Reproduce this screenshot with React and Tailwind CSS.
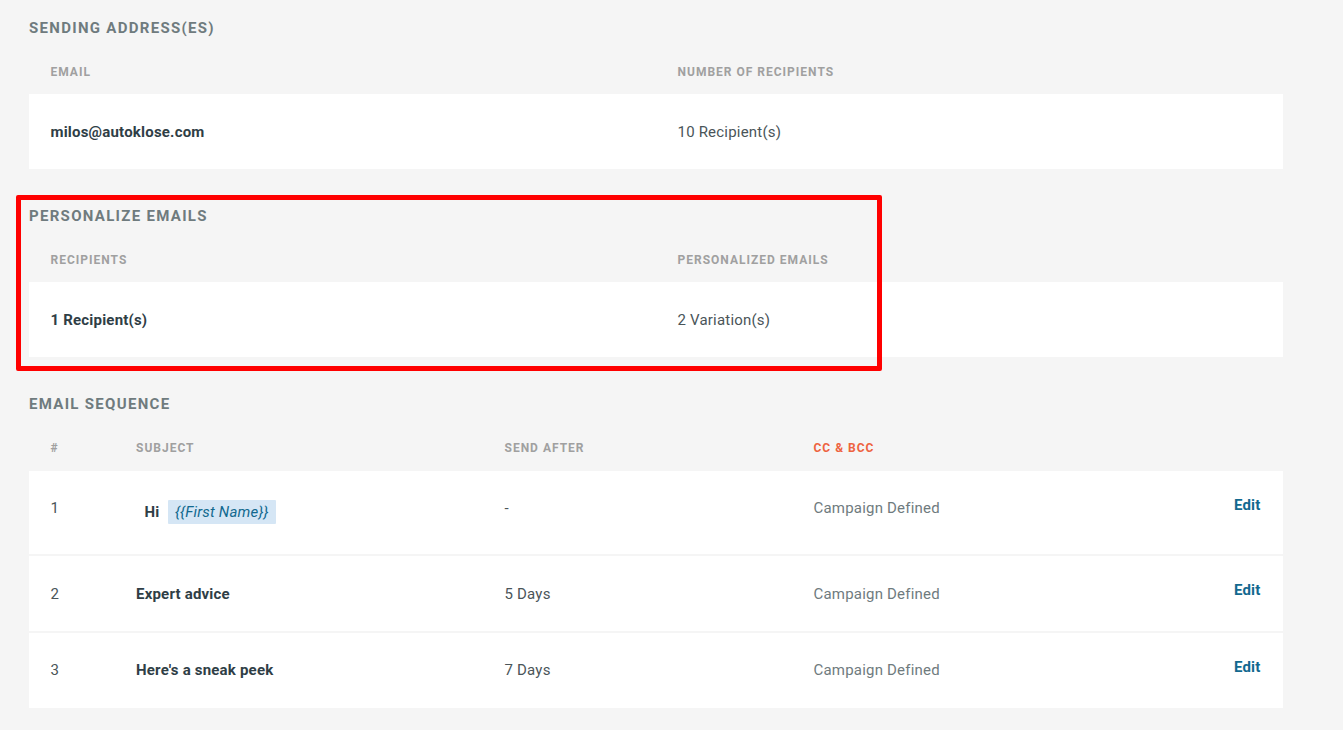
import React from "react";

const font = { fontFamily: "Roboto, sans-serif" };

function SectionTitle({ children }) {
  return (
    <h2 className="h-[20px] text-[15px] leading-[20px] font-bold tracking-[1.3px] text-[#6f7b7e]">
      {children}
    </h2>
  );
}

function HeadCell({ children, className = "text-[#a0a0a0]" }) {
  return (
    <div className={`text-[12px] leading-[16px] font-bold tracking-[1px] ${className}`}>
      {children}
    </div>
  );
}

function SummaryTable({ title, leftHead, rightHead, left, right, className = "" }) {
  return (
    <section className={className}>
      <SectionTitle>{title}</SectionTitle>
      <div className="grid grid-cols-[627px_1fr] px-[21.5px] pt-[26px] pb-[14px]">
        <HeadCell>{leftHead}</HeadCell>
        <HeadCell>{rightHead}</HeadCell>
      </div>
      <div className="grid h-[75px] grid-cols-[627px_1fr] items-center bg-white px-[21.5px] pt-[2px] text-[15px] tracking-[0.2px]">
        <div className="font-bold text-[#2f3e46]">{left}</div>
        <div className="text-[#4a5559]">{right}</div>
      </div>
    </section>
  );
}

const seqCols = "grid grid-cols-[85.5px_368.5px_309px_1fr]";

function SeqRow({ num, subject, after, height, top, editOffset = "-mt-[3px]" }) {
  return (
    <div className={`${seqCols} ${height} ${top} bg-white pr-[22.5px] pl-[21.5px] text-[15px] leading-[20px] tracking-[0.2px]`}>
      <div className="text-[#4a5559]">{num}</div>
      <div className="font-bold text-[#2f3e46]">{subject}</div>
      <div className="text-[#4a5559]">{after}</div>
      <div className="flex justify-between">
        <span className="text-[#6f7b7e]">Campaign Defined</span>
        <a className={`${editOffset} font-bold text-[#12698f]`}>Edit</a>
      </div>
    </div>
  );
}

export default function App() {
  return (
    <div style={font} className="relative h-[730px] w-[1343px] overflow-hidden bg-[#f5f5f5] pt-[18px] pl-[29px]">
      <div className="w-[1254px]">
        <SummaryTable
          title="SENDING ADDRESS(ES)"
          leftHead="EMAIL"
          rightHead="NUMBER OF RECIPIENTS"
          left="milos@autoklose.com"
          right="10 Recipient(s)"
        />
        <SummaryTable
          className="mt-[37px]"
          title="PERSONALIZE EMAILS"
          leftHead="RECIPIENTS"
          rightHead="PERSONALIZED EMAILS"
          left="1 Recipient(s)"
          right="2 Variation(s)"
        />
        <section className="mt-[37px]">
          <SectionTitle>EMAIL SEQUENCE</SectionTitle>
          <div className={`${seqCols} px-[21.5px] pt-[26px] pb-[15px]`}>
            <HeadCell>#</HeadCell>
            <HeadCell>SUBJECT</HeadCell>
            <HeadCell>SEND AFTER</HeadCell>
            <HeadCell className="text-[#ee6340]">CC &amp; BCC</HeadCell>
          </div>
          <SeqRow
            num="1"
            height="h-[85px] border-b-2 border-[#f5f5f5]"
            top="pt-[27px]"
            after="-"
            subject={
              <span className="mt-[2px] ml-[8.5px] flex items-center">
                Hi
                <span className="ml-[8.5px] h-[24px] rounded-[1px] bg-[#d5e6f5] px-[7px] text-[15px] leading-[24px] font-normal text-[#12698f] italic">
                  {"{{First Name}}"}
                </span>
              </span>
            }
          />
          <SeqRow
            num="2"
            height="h-[77px] border-b-2 border-[#f5f5f5]"
            top="pt-[28px]"
            subject="Expert advice"
            after="5 Days"
            editOffset="-mt-[4px]"
          />
          <SeqRow
            num="3"
            height="h-[75px]"
            top="pt-[27px]"
            subject="Here's a sneak peek"
            after="7 Days"
          />
        </section>
      </div>
      {/* annotation box drawn over the page */}
      <div className="absolute top-[195px] left-[16px] h-[176px] w-[866px] rounded-[2px] border-[5px] border-[#ff0000]" />
    </div>
  );
}
